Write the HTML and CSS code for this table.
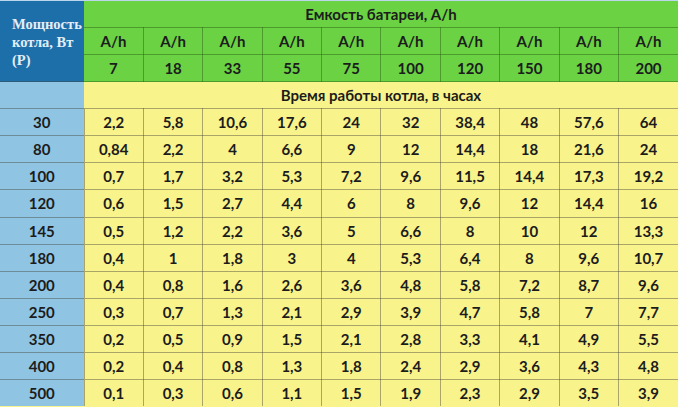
FILE: index.html
```html
<!DOCTYPE html>
<html lang="ru">
<head>
<meta charset="utf-8">
<link rel="stylesheet" href="styles.css">
</head>
<body>
<table class="tbl">
  <colgroup>
    <col class="c-first">
    <col span="10" class="c-data">
  </colgroup>
  <tr>
    <th class="corner" rowspan="3">Мощность котла, Вт (P)</th>
    <th class="green span-head" colspan="10">Емкость батареи, A/h</th>
  </tr>
  <tr class="green-row">
    <th>A/h</th><th>A/h</th><th>A/h</th><th>A/h</th><th>A/h</th><th>A/h</th><th>A/h</th><th>A/h</th><th>A/h</th><th>A/h</th>
  </tr>
  <tr class="green-row">
    <th>7</th><th>18</th><th>33</th><th>55</th><th>75</th><th>100</th><th>120</th><th>150</th><th>180</th><th>200</th>
  </tr>
  <tr>
    <td class="blue"></td>
    <td class="yellow span-head" colspan="10">Время работы котла, в часах</td>
  </tr>
  <tr><td class="blue">30</td><td>2,2</td><td>5,8</td><td>10,6</td><td>17,6</td><td>24</td><td>32</td><td>38,4</td><td>48</td><td>57,6</td><td>64</td></tr>
  <tr><td class="blue">80</td><td>0,84</td><td>2,2</td><td>4</td><td>6,6</td><td>9</td><td>12</td><td>14,4</td><td>18</td><td>21,6</td><td>24</td></tr>
  <tr><td class="blue">100</td><td>0,7</td><td>1,7</td><td>3,2</td><td>5,3</td><td>7,2</td><td>9,6</td><td>11,5</td><td>14,4</td><td>17,3</td><td>19,2</td></tr>
  <tr><td class="blue">120</td><td>0,6</td><td>1,5</td><td>2,7</td><td>4,4</td><td>6</td><td>8</td><td>9,6</td><td>12</td><td>14,4</td><td>16</td></tr>
  <tr><td class="blue">145</td><td>0,5</td><td>1,2</td><td>2,2</td><td>3,6</td><td>5</td><td>6,6</td><td>8</td><td>10</td><td>12</td><td>13,3</td></tr>
  <tr><td class="blue">180</td><td>0,4</td><td>1</td><td>1,8</td><td>3</td><td>4</td><td>5,3</td><td>6,4</td><td>8</td><td>9,6</td><td>10,7</td></tr>
  <tr><td class="blue">200</td><td>0,4</td><td>0,8</td><td>1,6</td><td>2,6</td><td>3,6</td><td>4,8</td><td>5,8</td><td>7,2</td><td>8,7</td><td>9,6</td></tr>
  <tr><td class="blue">250</td><td>0,3</td><td>0,7</td><td>1,3</td><td>2,1</td><td>2,9</td><td>3,9</td><td>4,7</td><td>5,8</td><td>7</td><td>7,7</td></tr>
  <tr><td class="blue">350</td><td>0,2</td><td>0,5</td><td>0,9</td><td>1,5</td><td>2,1</td><td>2,8</td><td>3,3</td><td>4,1</td><td>4,9</td><td>5,5</td></tr>
  <tr><td class="blue">400</td><td>0,2</td><td>0,4</td><td>0,8</td><td>1,3</td><td>1,8</td><td>2,4</td><td>2,9</td><td>3,6</td><td>4,3</td><td>4,8</td></tr>
  <tr><td class="blue">500</td><td>0,1</td><td>0,3</td><td>0,6</td><td>1,1</td><td>1,5</td><td>1,9</td><td>2,3</td><td>2,9</td><td>3,5</td><td>3,9</td></tr>
</table>
</body>
</html>
```
FILE: styles.css
```css
html, body {
  margin: 0;
  padding: 0;
  background: #f9f38b;
}

.tbl {
  width: 678px;
  table-layout: fixed;
  border-collapse: collapse;
  border-top: 1px solid #bcd6ee;
  font-family: Lato, "Liberation Sans", sans-serif;
  font-weight: bold;
  font-size: 15px;
  color: #1c1c1c;
}

.c-first { width: 84px; }
.c-data { width: 59.4px; }

.tbl tr { height: 27.07px; }

.tbl th,
.tbl td {
  padding: 0;
  text-align: center;
  vertical-align: middle;
  background: #f9f38b;
  border: 1px solid rgba(70, 70, 60, 0.45);
  font-weight: bold;
  line-height: 18px;
}

.tbl tr > :first-child { border-left: none; }
.tbl tr > :last-child { border-right: none; }
.tbl tr:last-child > * { border-bottom: none; }

.corner {
  background: #1d6fa9 !important;
  color: #e2eef8;
  font-family: "Liberation Serif", "DejaVu Serif", serif;
  font-size: 14.5px;
  line-height: 15.5px;
  text-align: left !important;
  vertical-align: top !important;
  padding: 14px 6px 0 12px !important;
  border: none !important;
}

.green,
.green-row th {
  background: #6ad243 !important;
}

.green-row th {
  border-color: rgba(40, 90, 20, 0.45);
}

.span-head {
  border-left: none !important;
}

.green.span-head {
  border-color: rgba(40, 90, 20, 0.45);
  border-top: none;
}

.yellow.span-head {
  border-top: none;
}

.blue {
  background: #8fc5e3 !important;
  border-left: none;
  border-right: none !important;
}
```
